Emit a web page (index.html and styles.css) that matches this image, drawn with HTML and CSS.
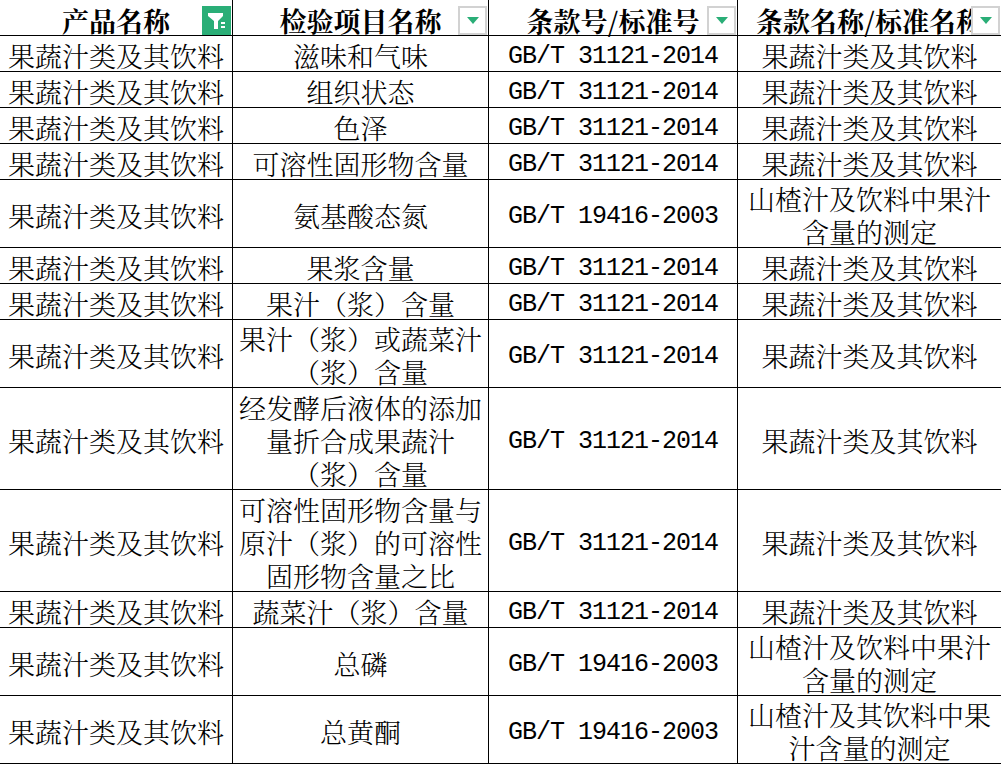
FILE: index.html
```html
<!DOCTYPE html>
<html lang="zh-CN">
<head>
<meta charset="utf-8">
<title>果蔬汁类及其饮料</title>
<link rel="stylesheet" href="styles.css">
</head>
<body>
<div class="sheet">
  <div class="cell head">产品名称
    <span class="filter active"><svg width="29" height="29" viewBox="0 0 29 29"><path d="M6 7 H21 V10 L16 15 V23 H12 V15 L6 10 Z" fill="#fff"/><rect x="19" y="16" width="4" height="2" fill="#fff"/><rect x="19" y="20" width="4" height="2" fill="#fff"/></svg></span>
  </div>
  <div class="cell head">检验项目名称<span class="filter"><span class="tri"></span></span></div>
  <div class="cell head">条款号/标准号<span class="filter"><span class="tri"></span></span></div>
  <div class="cell head">条款名称/标准名称<span class="filter"><span class="tri"></span></span></div>

  <div class="cell">果蔬汁类及其饮料</div><div class="cell">滋味和气味</div><div class="cell code">GB/T 31121-2014</div><div class="cell">果蔬汁类及其饮料</div>
  <div class="cell">果蔬汁类及其饮料</div><div class="cell">组织状态</div><div class="cell code">GB/T 31121-2014</div><div class="cell">果蔬汁类及其饮料</div>
  <div class="cell">果蔬汁类及其饮料</div><div class="cell">色泽</div><div class="cell code">GB/T 31121-2014</div><div class="cell">果蔬汁类及其饮料</div>
  <div class="cell">果蔬汁类及其饮料</div><div class="cell">可溶性固形物含量</div><div class="cell code">GB/T 31121-2014</div><div class="cell">果蔬汁类及其饮料</div>
  <div class="cell">果蔬汁类及其饮料</div><div class="cell">氨基酸态氮</div><div class="cell code">GB/T 19416-2003</div><div class="cell">山楂汁及饮料中果汁<br>含量的测定</div>
  <div class="cell">果蔬汁类及其饮料</div><div class="cell">果浆含量</div><div class="cell code">GB/T 31121-2014</div><div class="cell">果蔬汁类及其饮料</div>
  <div class="cell">果蔬汁类及其饮料</div><div class="cell">果汁（浆）含量</div><div class="cell code">GB/T 31121-2014</div><div class="cell">果蔬汁类及其饮料</div>
  <div class="cell">果蔬汁类及其饮料</div><div class="cell">果汁（浆）或蔬菜汁<br>（浆）含量</div><div class="cell code">GB/T 31121-2014</div><div class="cell">果蔬汁类及其饮料</div>
  <div class="cell">果蔬汁类及其饮料</div><div class="cell">经发酵后液体的添加<br>量折合成果蔬汁<br>（浆）含量</div><div class="cell code">GB/T 31121-2014</div><div class="cell">果蔬汁类及其饮料</div>
  <div class="cell">果蔬汁类及其饮料</div><div class="cell">可溶性固形物含量与<br>原汁（浆）的可溶性<br>固形物含量之比</div><div class="cell code">GB/T 31121-2014</div><div class="cell">果蔬汁类及其饮料</div>
  <div class="cell">果蔬汁类及其饮料</div><div class="cell">蔬菜汁（浆）含量</div><div class="cell code">GB/T 31121-2014</div><div class="cell">果蔬汁类及其饮料</div>
  <div class="cell">果蔬汁类及其饮料</div><div class="cell">总磷</div><div class="cell code">GB/T 19416-2003</div><div class="cell">山楂汁及饮料中果汁<br>含量的测定</div>
  <div class="cell">果蔬汁类及其饮料</div><div class="cell">总黄酮</div><div class="cell code">GB/T 19416-2003</div><div class="cell">山楂汁及其饮料中果<br>汁含量的测定</div>
</div>
</body>
</html>
```
FILE: styles.css
```css
html, body {
  margin: 0;
  padding: 0;
  background: #fff;
}
body {
  width: 1001px;
  height: 765px;
  overflow: hidden;
}
.sheet {
  display: grid;
  grid-template-columns: 233px 256px 249px 264px;
  grid-template-rows: 36px 36px 36px 36px 36px 68px 36px 36px 68px 102px 102px 36px 68px 68px;
  font-family: "Noto Serif CJK SC", "Noto Sans CJK SC", sans-serif;
  font-size: 27px;
  font-weight: 300;
  color: #000;
}
.cell {
  box-sizing: border-box;
  border-right: 1px solid #000;
  border-bottom: 1px solid #000;
  padding-top: 3px;
  display: flex;
  align-items: center;
  justify-content: center;
  text-align: center;
  line-height: 33px;
  white-space: nowrap;
}
.head {
  position: relative;
  font-weight: 700;
  padding-top: 6px;
}
.code {
  font-family: "Liberation Mono", monospace;
  font-weight: 400;
  font-size: 25px;
  letter-spacing: -1px;
  padding-top: 5px;
}
.filter {
  position: absolute;
  right: 1px;
  top: 6px;
  width: 29px;
  height: 29px;
  box-sizing: border-box;
  border: 2px solid #d2d2d2;
  background: #fff;
  display: flex;
  align-items: center;
  justify-content: center;
}
.filter.active {
  border: none;
  background: #2aae77;
}
.tri {
  width: 0;
  height: 0;
  border-left: 6px solid transparent;
  border-right: 6px solid transparent;
  border-top: 7px solid #2aae77;
}
```
